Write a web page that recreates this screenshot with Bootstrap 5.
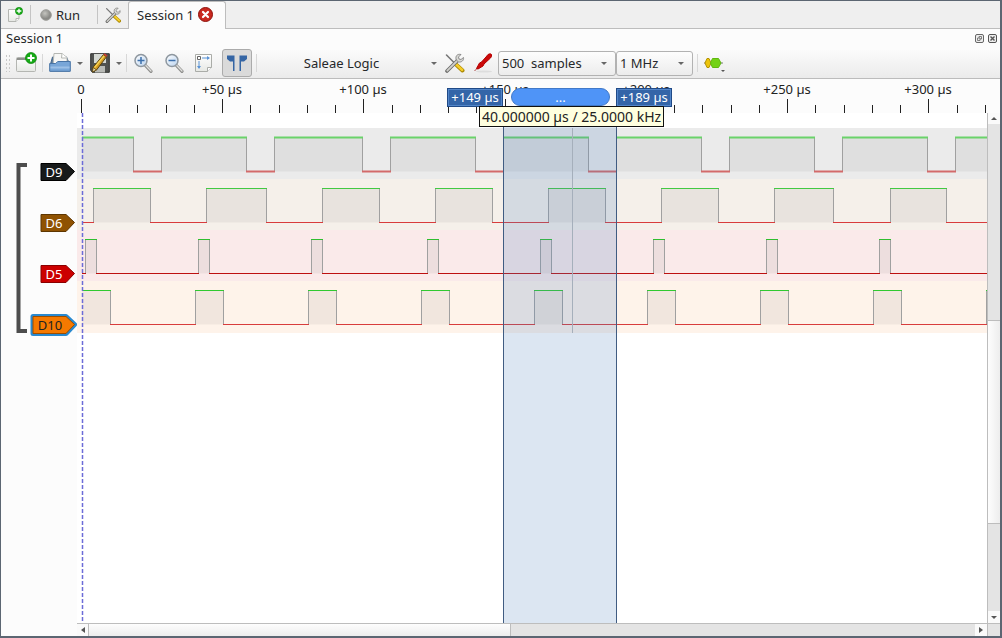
<!DOCTYPE html>
<html lang="en">
<head>
<meta charset="utf-8">
<meta name="viewport" content="width=device-width, initial-scale=1">
<title>Session 1</title>
<link href="https://cdn.jsdelivr.net/npm/bootstrap@5.3.0/dist/css/bootstrap.min.css" rel="stylesheet">
<style>
body{font:13px/18px "Noto Sans",sans-serif;color:#26282a;background:#fcfcfc}
svg{display:block;flex:none}
svg text{font:13px "Noto Sans",sans-serif}
.frame{border:1px solid #5c6672;border-right-width:2px;border-bottom-width:2px}
.tabs{height:28px;background:#efefef;border-bottom:1px solid #bdbdbd}
.tool{border:0;background:none;padding:0;color:inherit;display:flex;align-items:center;justify-content:center;height:28px;flex:none}
.rule{width:1px;background:#c4c4c4;margin:4px 0}
.tab-on{background:#fcfcfc;border:1px solid #bdbdbd;border-bottom:0;border-radius:3px 3px 0 0;margin-bottom:-1px;width:98px;gap:4px;padding:0 4px 2px 0}
.dock{height:21px;padding:0 3px 3px 5px}
.bar{height:29px;background:linear-gradient(#fbfbfb,#ebebeb);border-bottom:1px solid #bcbcbc;padding:0 0 2px 4px}
.bar .rule{height:18px;background:#d8d8d8}
.grip{width:5px;height:18px;background:radial-gradient(circle,#c8c8c8 1px,transparent 1px) 0 0/3px 4px}
.pressed{width:30px;border:1px solid #ababab;border-radius:3px;background:#dadada}
.arrow{width:0;border:3px solid transparent;border-top-color:#686868;border-bottom:0}
.device{width:183px;position:relative;padding-right:14px}
.device .arrow{position:absolute;right:3px}
.combo{font:13px/18px "Noto Sans",sans-serif;color:#26282a;height:25px;padding:0 16px 0 3px;border:1px solid #b2b2b2;border-radius:3px;appearance:none;white-space:pre;
 background:url("data:image/svg+xml,%3Csvg xmlns='http://www.w3.org/2000/svg' width='6' height='3'%3E%3Cpath d='M0 0h6L3 3z' fill='%23666'/%3E%3C/svg%3E") no-repeat right 8px center,linear-gradient(#fdfdfd,#ececec)}
.samples{width:118px}.rate{width:77px}
.timeline{height:34px}
.flag{position:absolute;top:9px;height:19px;line-height:17px;width:56px;text-align:center;color:#fff;background:#3465a8;border:1px solid #204a87;box-shadow:inset 0 0 0 1px #5386c9;z-index:2}
.flag-a{left:446px}.flag-b{left:615px}
.span-pill{position:absolute;top:9px;left:510px;width:99px;height:18px;line-height:16px;border-radius:9px;background:#4f94f7;border:1px solid #4179c8;color:#fff;text-align:center}
.tip{position:absolute;top:27px;left:478px;height:21px;font-size:14px;line-height:19px;width:185px;display:flex;justify-content:center;background:#ffffdf;border:1px solid #111;color:#222;z-index:3;white-space:nowrap}
.names{width:76px}
.plot{background:#fff;min-width:0;overflow:hidden;position:relative}
.plot svg{position:absolute;width:100%;height:100%}
.vbar{width:13px;border-left:1px solid #bdbdbd;background:#e4e4e4}
.hbar{height:13px;border-top:1px solid #bdbdbd;background:#e4e4e4}
.thumb{background:linear-gradient(90deg,#fdfdfd,#ededed);border:solid #bdbdbd;border-width:1px 0}
.hbar .thumb{background:linear-gradient(#fdfdfd,#ededed);border-width:0 1px}
.step{border:0;padding:0;background:#fafafa;flex:none;display:flex;align-items:center;justify-content:center}
</style>
</head>
<body>
<svg width="0" height="0" class="position-absolute">
<defs>
<linearGradient id="lens" x2="1" y2="1"><stop stop-color="#fff"/><stop offset="1" stop-color="#b9d2ee"/></linearGradient>
<linearGradient id="paper" x2="0" y2="1"><stop stop-color="#fff"/><stop offset="1" stop-color="#e6e8e4"/></linearGradient>
<radialGradient id="ball" cx=".4" cy=".35"><stop stop-color="#c4c4bf"/><stop offset="1" stop-color="#8a8a86"/></radialGradient>
<symbol id="plus" viewBox="0 0 12 12"><circle cx="6" cy="6" r="5.5" fill="#16ab16" stroke="#098009" stroke-width=".7"/><path d="M6 2.5v7M2.5 6h7" stroke="#fff" stroke-width="2"/></symbol>
<symbol id="tools" viewBox="0 0 20 20"><path d="M2 2l9 9" stroke="#777" stroke-width="1.6" stroke-linecap="round"/><path d="M11 11l7 6.500" stroke="#a98600" stroke-width="4" stroke-linecap="round"/><path d="M11.200 11l6.500 6" stroke="#f4cc28" stroke-width="2.500" stroke-linecap="round"/><path d="M2.500 18L13 7.500" stroke="#6c6c6a" stroke-width="3.600" stroke-linecap="round"/><path d="M2.800 17.700L13 7.500" stroke="#cfcfcb" stroke-width="1.800" stroke-linecap="round"/><path d="M16.500 1.500c-4-1-6 2-4.700 5.500l2.200 2c3 .5 5.500-1.500 5-4.500l-2.500 2-2-.5-.5-2z" fill="#d8d8d4" stroke="#777" stroke-width=".8"/></symbol>
<symbol id="zoom" viewBox="0 0 20 20"><path d="M12 12l6 6.300" stroke="#8d8d8b" stroke-width="3.200" stroke-linecap="round"/><path d="M12.500 12.300l5.500 5.700" stroke="#e0e0de" stroke-width="1.300" stroke-linecap="round"/><circle cx="8" cy="7.500" r="6" fill="url(#lens)" stroke="#8e979f" stroke-width="1.500"/></symbol>
</defs>
</svg>
<div class="frame vh-100 d-flex flex-column overflow-hidden">
<nav class="tabs d-flex flex-shrink-0">
 <button class="tool" style="width:29px" aria-label="New session"><svg width="17" height="16" viewBox="0 0 17 16"><path d="M1.500 2.500h10.500v9l-3 3H1.500z" fill="url(#paper)" stroke="#b4b6b2"/><path d="M12 11.500H9v3" fill="#fff" stroke="#b4b6b2"/><use href="#plus" x="8" y="0" width="8" height="8"/></svg></button>
 <span class="rule"></span>
 <button class="tool gap-1" style="width:58px"><svg width="12" height="12"><circle cx="6" cy="6" r="5.300" fill="url(#ball)" stroke="#9c9c98"/></svg>Run</button>
 <span class="rule ms-2"></span>
 <button class="tool" style="width:30px" aria-label="Settings"><svg width="16" height="16"><use href="#tools"/></svg></button>
 <button class="tool tab-on">Session 1<svg width="15" height="15" viewBox="0 0 15 15"><circle cx="7.500" cy="7.500" r="7" fill="#c9281e" stroke="#8d120c"/><path d="M5 5l5 5M10 5l-5 5" stroke="#fff" stroke-width="2.200" stroke-linecap="round"/></svg></button>
</nav>
<header class="dock d-flex align-items-center justify-content-between flex-shrink-0"><span>Session 1</span>
 <span class="d-flex gap-1">
 <button class="tool" style="height:10px" aria-label="Float"><svg width="9" height="9" viewBox="0 0 9 9" fill="none" stroke="#666"><rect x=".5" y=".5" width="8" height="8" rx="1.500" fill="#eee"/><path d="M4 4V2.500h2.500V5H5M2.500 4H5v2.500H2.500z" stroke-width=".8"/></svg></button>
 <button class="tool" style="height:10px" aria-label="Close"><svg width="9" height="9" viewBox="0 0 9 9" fill="none" stroke="#555"><rect x=".5" y=".5" width="8" height="8" rx="1.500" fill="#eee"/><path d="M2.500 2.500l4 4M6.500 2.500l-4 4" stroke-width="1.400"/></svg></button>
 </span></header>
<div class="bar d-flex align-items-center flex-shrink-0">
 <span class="grip"></span>
 <button class="tool" style="width:32px" aria-label="New view"><svg width="22" height="22" viewBox="0 0 22 22"><rect x="1.500" y="5.500" width="19" height="14" rx="1" fill="url(#paper)" stroke="#b4b6b2"/><path d="M2 6h18v2H2z" fill="#8e908c"/><use href="#plus" x="10" y="0" width="12" height="12"/></svg></button>
 <span class="rule"></span>
 <button class="tool" style="width:34px" aria-label="Open"><svg width="22" height="22" viewBox="0 0 22 22"><path d="M1.500 12l2-7h14l3 7v7h-19z" fill="#56789c" stroke="#47688c"/><path d="M4 13L5 1.500h8l5 4V13z" fill="#f7f7f5" stroke="#b5b7b3"/><path d="M13 1.500l-.5 4.500H18" fill="#fff" stroke="#b5b7b3"/><path d="M.700 11.500h6l2-2h12.600v9.800H.700z" fill="#78a6d8" stroke="#4874a6"/><path d="M1.500 15.500h19" stroke="#9dc0e6" stroke-width="2"/></svg></button>
 <span class="arrow"></span>
 <button class="tool" style="width:33px" aria-label="Save"><svg width="20" height="20" viewBox="0 0 20 20"><path d="M.7.7h18.600v18.600H2.500L.7 17.500z" fill="#505250" stroke="#303230"/><path d="M4 1h12v9H4z" fill="#d4d8d3"/><path d="M5 13h10v6.500H5z" fill="#b8bab6"/><path d="M3 14.500L13.500 1.500l3 2.300L6.500 17l-4 2z" fill="#d39a22" stroke="#59420c"/><path d="M13.500 1.500l1-1.300 3 2.300-1 1.300z" fill="#c8382e"/><path d="M4.500 14.500L14 3" stroke="#f7d253" stroke-width="1.400"/><path d="M3.300 14.500l3 2.500-4 2z" fill="#e9d9ac" stroke="#59420c" stroke-width=".7"/></svg></button>
 <span class="arrow"></span>
 <span class="rule ms-1"></span>
 <button class="tool" style="width:32px" aria-label="Zoom in"><svg width="20" height="20" viewBox="0 0 20 20"><use href="#zoom"/><path d="M8 4v7M4.500 7.500h7" stroke="#3d70ac" stroke-width="1.500"/></svg></button>
 <button class="tool" style="width:29px" aria-label="Zoom out"><svg width="20" height="20" viewBox="0 0 20 20"><use href="#zoom"/><path d="M4.500 7.500h7" stroke="#3d70ac" stroke-width="1.500"/></svg></button>
 <button class="tool" style="width:30px" aria-label="Zoom to fit"><svg width="19" height="20" viewBox="0 0 19 20"><path d="M1.500 1.500h16v13l-4 4h-12z" fill="url(#paper)" stroke="#aaaca8"/><path d="M17.500 14.500h-4v4" fill="#fff" stroke="#aaaca8"/><path d="M3.500 3.500h3v3h-3z" fill="#fff" stroke="#666"/><path d="M8 5h7M5 8v7" stroke="#5b93d6"/><path d="M13 3l3 2-3 2zM3 13l2 3 2-3z" fill="#5b93d6"/></svg></button>
 <button class="tool pressed ms-1" aria-label="Show cursors"><svg width="22" height="18" viewBox="0 0 22 18"><path d="M1 1.500h7.500V17H7V7.500H4L1 5zM21 1.500h-7.500V17H15V7.500h3L21 5z" fill="#3565a4"/></svg></button>
 <span class="rule ms-1"></span>
 <button class="tool device">Saleae Logic<span class="arrow"></span></button>
 <button class="tool" style="width:28px" aria-label="Configure device"><svg width="21" height="20"><use href="#tools"/></svg></button>
 <button class="tool" style="width:30px" aria-label="Channels"><svg width="20" height="20" viewBox="0 0 20 20"><ellipse cx="11" cy="18.500" rx="8" ry="1" fill="#ddd"/><path d="M1.500 18l6-6" stroke="#a44"/><path d="M3.500 15.500l3-5.500 2-1 4.500-5 2-2.500q2.500-1.500 3.500 0 .5 2-1 3.500L11 11l-1 2-5 3z" fill="#cb0909" stroke="#b40000"/></svg></button>
 <select class="combo samples" aria-label="Sample count"><option>500&nbsp; samples</option></select>
 <select class="combo rate" aria-label="Sample rate"><option>1 MHz</option></select>
 <span class="rule ms-1"></span>
 <button class="tool" style="width:32px" aria-label="Add decoder"><svg width="22" height="20" viewBox="0 0 22 20"><path d="M1 10h19" stroke="#777"/><path d="M4 5.500h2l2 4.500-2 4.500H4L2 10z" fill="#edc40b" stroke="#b49300"/><path d="M9.500 5.500h6l2.500 4.500-2.500 4.500h-6L7.500 10z" fill="#73d216" stroke="#5fb80f"/><path d="M18 17h4l-2 2z" fill="#555"/></svg></button>
</div>
<div class="timeline position-relative flex-shrink-0"><svg id="ruler" width="100%" height="34" role="img" aria-label="Time ruler"></svg>
 <div class="flag flag-a">+149 µs</div><div class="span-pill">...</div><div class="flag flag-b">+189 µs</div>
 <div class="tip" role="tooltip">40.000000 µs / 25.0000 kHz</div>
</div>
<main class="d-flex flex-grow-1" style="min-height:0">
 <aside class="names flex-shrink-0"><svg id="labels" width="76" height="240" role="img" aria-label="Channels"></svg></aside>
 <div class="d-flex flex-column flex-grow-1" style="min-width:0">
  <div class="plot flex-grow-1"><svg id="traces" role="img" aria-label="Logic traces"></svg></div>
  <div class="hbar d-flex flex-shrink-0"><button class="step" style="width:11px" aria-label="Left"><svg width="4" height="6"><path d="M4 0v6L0 3z" fill="#555"/></svg></button><div class="thumb" style="width:46.5%"></div><button class="step ms-auto" style="width:12px" aria-label="Right"><svg width="4" height="6"><path d="M0 0v6l4-3z" fill="#555"/></svg></button></div>
 </div>
 <div class="vbar d-flex flex-column flex-shrink-0"><button class="step" style="height:11px" aria-label="Up"><svg width="6" height="3"><path d="M0 3h6L3 0z" fill="#555"/></svg></button><div style="height:37.5%"></div><div class="thumb" style="height:39%"></div><button class="step mt-auto" style="height:12px" aria-label="Down"><svg width="6" height="3"><path d="M0 0h6L3 3z" fill="#555"/></svg></button><div class="hbar"></div></div>
</main>
</div>
<script src="https://cdn.jsdelivr.net/npm/bootstrap@5.3.0/dist/js/bootstrap.bundle.min.js"></script>
<script>
const scale = 2.8245; // pixels per microsecond
const X = t => Math.round(t * scale);

function drawRuler() {
  const el = document.getElementById('ruler'), width = el.getBoundingClientRect().width;
  let ruler = '';
  for (let t = 0; 81 + X(t) < width - 13; t += 10) {
    const x = 80.5 + X(t), major = t % 50 === 0;
    ruler += `<path d="M${x} ${major ? 20 : 26}V34" stroke="#222"/>`;
    if (major) ruler += `<text x="${x - .5}" y="15" text-anchor="middle" fill="#222">${t ? '+' + t + ' µs' : '0'}</text>`;
  }
  el.innerHTML = ruler;
}
drawRuler();
addEventListener('resize', drawRuler);

// edge times in microseconds; a trace starts high when its first edge is at 0
const channels = [
  {name:'D9', fill:'#171a1a', line:'#000', text:'#fff', bg:'#ebebeb', high:'#6ad36a', low:'#d36a6a',
   edges:[0,18,28,58,68,99,109,139,149,179,189,219,229,259,269,299,309]},
  {name:'D6', fill:'#8f5202', line:'#5e3600', text:'#fff', bg:'#f5f0ea', high:'#42c942', low:'#d83c3c',
   edges:[4,24,44,65,85,105,125,145,165,185,205,225,245,266,286,306]},
  {name:'D5', fill:'#cc0000', line:'#8a0000', text:'#fff', bg:'#faeaea', high:'#30bd30', low:'#bd1010',
   edges:[1,5,41,45,81,85,122,126,162,166,202,206,242,246,282,286]},
  {name:'D10', fill:'#f57900', line:'#9c4d00', text:'#222', bg:'#fef3ea', high:'#30c930', low:'#d83c3c', selected:true,
   edges:[0,10,40,50,80,90,120,130,160,170,200,210,240,250,280,290,320]}
];
const lane = 51, end = 1000;
let out = '', tags = '<path d="M26 52H17.500V218H26" fill="none" stroke="#4d4d4d" stroke-width="4"/>';
channels.forEach((c, i) => {
  const top = 15 + i * lane, hi = top + 9.5, lo = hi + 34;
  out += `<rect x="-5" y="${top}" width="100%" height="52" fill="${c.bg}"/>`;
  const stops = [0, ...c.edges.filter(t => t), end];
  let level = c.edges[0] === 0;
  let fills = '', edges = '', runs = '';
  for (let k = 0; k < stops.length - 1; k++) {
    const a = X(stops[k]), b = X(stops[k + 1]);
    if (level) fills += `<rect x="${a}" y="${hi}" width="${b - a}" height="34" fill="#000" fill-opacity=".05"/>`;
    if (k) edges += `<path d="M${a + .5} ${hi}V${lo}" stroke="#a0a0a0"/>`;
    runs += `<path d="M${a} ${level ? hi : lo}H${b + 1}" stroke="${level ? c.high : c.low}" stroke-width="${i ? 1 : 2}"/>`;
    level = !level;
  }
  out += fills + edges + runs;
  const y = lo, x = c.selected ? 32 : 40;
  const shape = `M${x} ${y - 8}H65L73.500 ${y}L65 ${y + 9}H${x}Z`;
  if (c.selected) tags += `<path d="${shape}" fill="none" stroke="#2989cf" stroke-width="5" stroke-linejoin="round"/>`;
  tags += `<path d="${shape}" fill="${c.fill}" stroke="${c.line}"/><text x="${c.selected ? 49 : 53}" y="${y + 5}" text-anchor="middle" fill="${c.text}">${c.name}</text>`;
});
out += `<path d="M490.500 15V220" stroke="#bbb"/>`;
const a = X(149), b = X(189);
out += `<rect x="${a}" y="0" width="${b - a}" height="2000" fill="#5082be" fill-opacity=".2"/><path d="M${a + .5} 0V2000M${b + .5} 0V2000" stroke="#405c82"/>`;
out += '<path d="M.5 0V2000" stroke="#6c6cd8" stroke-width="1.500" stroke-dasharray="4 2"/>';
document.getElementById('traces').innerHTML = `<g transform="translate(5 0)">${out}</g>`;
document.getElementById('labels').innerHTML = tags;
</script>
</body>
</html>
